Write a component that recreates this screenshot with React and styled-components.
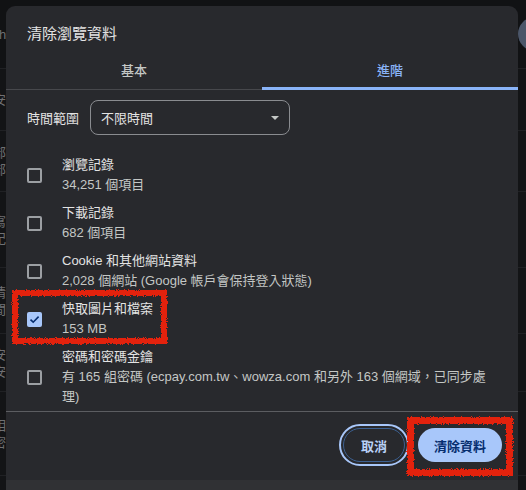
import React from 'react';
import styled, { createGlobalStyle } from 'styled-components';

const GlobalStyle = createGlobalStyle`
  html, body {
    margin: 0;
    padding: 0;
    background: #131416;
  }
  body {
    font-family: 'Liberation Sans', 'Noto Sans CJK TC', sans-serif;
    -webkit-font-smoothing: antialiased;
  }
`;

const Screen = styled.div`
  position: relative;
  width: 526px;
  height: 490px;
  overflow: hidden;
  background: #131416;
`;

/* page behind the dialog, only its edges show */
const BackPage = styled.div`
  display: flex;
  flex-direction: column;
  width: 100%;
  height: 100%;
`;

const BackHeader = styled.div`
  display: flex;
  align-items: center;
  justify-content: space-between;
  height: 68px;
  flex-shrink: 0;
  border-bottom: 1px solid #202124;
  background: #111214;
`;

const BackText = styled.span`
  margin-left: ${p => p.$shift || -3}px;
  color: #6f7073;
  font-size: 13px;
  line-height: 17px;
`;

const Avatar = styled.div`
  width: 34px;
  height: 34px;
  border-radius: 50%;
  background: #4b5669;
  margin-right: -26px;
`;

const BackRow = styled.div`
  display: flex;
  flex-direction: column;
  justify-content: center;
  height: ${p => p.$h}px;
  flex-shrink: 0;
  border-bottom: 1px solid #202124;
`;

const Dialog = styled.div`
  position: absolute;
  left: 6px;
  top: 6px;
  width: 512px;
  background: #28292d;
  border-radius: 9px 9px 0 0;
  color: #e3e3e3;
`;

const Title = styled.h2`
  margin: 0;
  padding: 18px 21px 5px;
  font-size: 15px;
  line-height: 20px;
  font-weight: 400;
  color: #e3e3e3;
`;

const Tabs = styled.div`
  display: grid;
  grid-template-columns: 1fr 1fr;
  border-bottom: 1px solid #47484c;
`;

const Tab = styled.div`
  position: relative;
  height: 40px;
  display: flex;
  align-items: center;
  justify-content: center;
  font-size: 13px;
  font-weight: 500;
  color: ${p => (p.$active ? '#8ab4f8' : '#c4c7c5')};

  &::after {
    content: '';
    display: ${p => (p.$active ? 'block' : 'none')};
    position: absolute;
    left: 0;
    right: 0;
    bottom: -1px;
    height: 3px;
    background: #8ab4f8;
  }
`;

const Body = styled.div`
  padding: 10px 21px 0;
`;

const FieldRow = styled.div`
  display: flex;
  align-items: center;
  gap: 13px;
`;

const FieldLabel = styled.span`
  width: 50px;
  font-size: 13px;
  color: #e3e3e3;
  white-space: nowrap;
`;

const Select = styled.div`
  box-sizing: border-box;
  width: 200px;
  height: 35px;
  border: 1px solid #8a8c90;
  border-radius: 8px;
  display: flex;
  align-items: center;
  justify-content: space-between;
  padding: 0 10px;
  font-size: 13px;
  color: #e3e3e3;
`;

const Caret = styled.span`
  width: 0;
  height: 0;
  border-left: 4px solid transparent;
  border-right: 4px solid transparent;
  border-top: 4px solid #c4c7c5;
`;

const OptionList = styled.div`
  display: flex;
  flex-direction: column;
  margin-top: 16px;
`;

const Option = styled.div`
  display: flex;
  align-items: center;
  padding: 4px 0;
`;

const BoxSlot = styled.div`
  width: 35px;
  flex-shrink: 0;
  display: flex;
  align-items: center;
`;

const Box = styled.div`
  box-sizing: border-box;
  width: 15px;
  height: 15px;
  border-radius: 2px;
  border: ${p => (p.$checked ? 'none' : '2px solid #9c9fa3')};
  background: ${p => (p.$checked ? '#a8c7fa' : 'transparent')};
  display: flex;
  align-items: center;
  justify-content: center;
`;

const OptionText = styled.div`
  display: flex;
  flex-direction: column;
`;

const OptionLabel = styled.span`
  font-size: 13px;
  line-height: 20px;
  color: #e3e3e3;
  white-space: nowrap;
`;

const OptionSub = styled.span`
  font-size: 13px;
  line-height: 20px;
  color: #c4c7c5;
  white-space: nowrap;
`;

const Footer = styled.div`
  border-top: 1px solid #5c5d61;
  display: flex;
  justify-content: flex-end;
  align-items: center;
  gap: 13px;
  padding: 16px 16px 18px;
`;

const Button = styled.button`
  box-sizing: border-box;
  height: 34px;
  padding: 0 ${p => (p.$primary ? 16 : 17)}px;
  border-radius: 17px;
  font-family: inherit;
  font-size: 13px;
  font-weight: 700;
  cursor: pointer;
  border: ${p => (p.$primary ? 'none' : '1px solid #3c6091')};
  background: ${p => (p.$primary ? '#a8c7fa' : 'transparent')};
  color: ${p => (p.$primary ? '#062e6f' : '#b8d0f6')};
  outline: ${p => (p.$focused ? '2px solid #a8c7fa' : 'none')};
  outline-offset: 2px;
`;

const BottomStrip = styled.div`
  height: 12px;
  background: #303134;
`;

const Mark = styled.svg`
  position: absolute;
  left: ${p => p.$x}px;
  top: ${p => p.$y}px;
  overflow: visible;
  pointer-events: none;
`;

const Check = () => (
  <svg width="11" height="9" viewBox="0 0 11 9">
    <path d="M1.5 4.6 L4.2 7.2 L9.6 1.6" fill="none" stroke="#062e6f" strokeWidth="1.6" />
  </svg>
);

const RoughBox = ({ x, y, w, h, sw, id }) => (
  <Mark $x={x} $y={y} width={w} height={h}>
    <defs>
      <filter id={id} x="-10%" y="-10%" width="120%" height="120%">
        <feTurbulence type="fractalNoise" baseFrequency="0.9" numOctaves="2" seed="3" />
        <feDisplacementMap in="SourceGraphic" scale="4" />
      </filter>
    </defs>
    <rect
      x={sw / 2}
      y={sw / 2}
      width={w - sw}
      height={h - sw}
      fill="none"
      stroke="#e3240e"
      strokeWidth={sw}
      filter={`url(#${id})`}
    />
  </Mark>
);

const options = [
  { label: '瀏覽記錄', sub: ['34,251 個項目'] },
  { label: '下載記錄', sub: ['682 個項目'] },
  { label: 'Cookie 和其他網站資料', sub: ['2,028 個網站 (Google 帳戶會保持登入狀態)'] },
  { label: '快取圖片和檔案', sub: ['153 MB'], checked: true },
  {
    label: '密碼和密碼金鑰',
    sub: ['有 165 組密碼 (ecpay.com.tw、wowza.com 和另外 163 個網域，已同步處', '理)'],
  },
];

const backRows = [
  { h: 61, lines: ['安'] },
  { h: 60, lines: ['部', '部'] },
  { h: 75, lines: ['寫', '紀'] },
  { h: 65, lines: ['情', '間'] },
  { h: 57, lines: ['安', '安'] },
  { h: 83, lines: ['相', '密'] },
  { h: 40, lines: [] },
];

const App = () => {
  return (
    <Screen>
      <GlobalStyle />
      <BackPage>
        <BackHeader>
          <BackText $shift={-1}>h</BackText>
          <Avatar />
        </BackHeader>
        {backRows.map((row, i) => (
          <BackRow key={i} $h={row.h}>
            {row.lines.map((t, j) => (
              <BackText key={j} $shift={-7}>{t}</BackText>
            ))}
          </BackRow>
        ))}
      </BackPage>

      <Dialog>
        <Title>清除瀏覽資料</Title>
        <Tabs>
          <Tab>基本</Tab>
          <Tab $active>進階</Tab>
        </Tabs>
        <Body>
          <FieldRow>
            <FieldLabel>時間範圍</FieldLabel>
            <Select>
              <span>不限時間</span>
              <Caret />
            </Select>
          </FieldRow>
          <OptionList>
            {options.map(opt => (
              <Option key={opt.label}>
                <BoxSlot>
                  <Box $checked={opt.checked}>{opt.checked && <Check />}</Box>
                </BoxSlot>
                <OptionText>
                  <OptionLabel>{opt.label}</OptionLabel>
                  {opt.sub.map(s => (
                    <OptionSub key={s}>{s}</OptionSub>
                  ))}
                </OptionText>
              </Option>
            ))}
          </OptionList>
        </Body>
        <Footer>
          <Button $focused>取消</Button>
          <Button $primary>清除資料</Button>
        </Footer>
        <BottomStrip />
      </Dialog>

      <RoughBox id="mark-a" x={12} y={290} w={155} h={54} sw={6} />
      <RoughBox id="mark-b" x={407} y={417} w={106} h={59} sw={7} />
    </Screen>
  );
};

export default App;
